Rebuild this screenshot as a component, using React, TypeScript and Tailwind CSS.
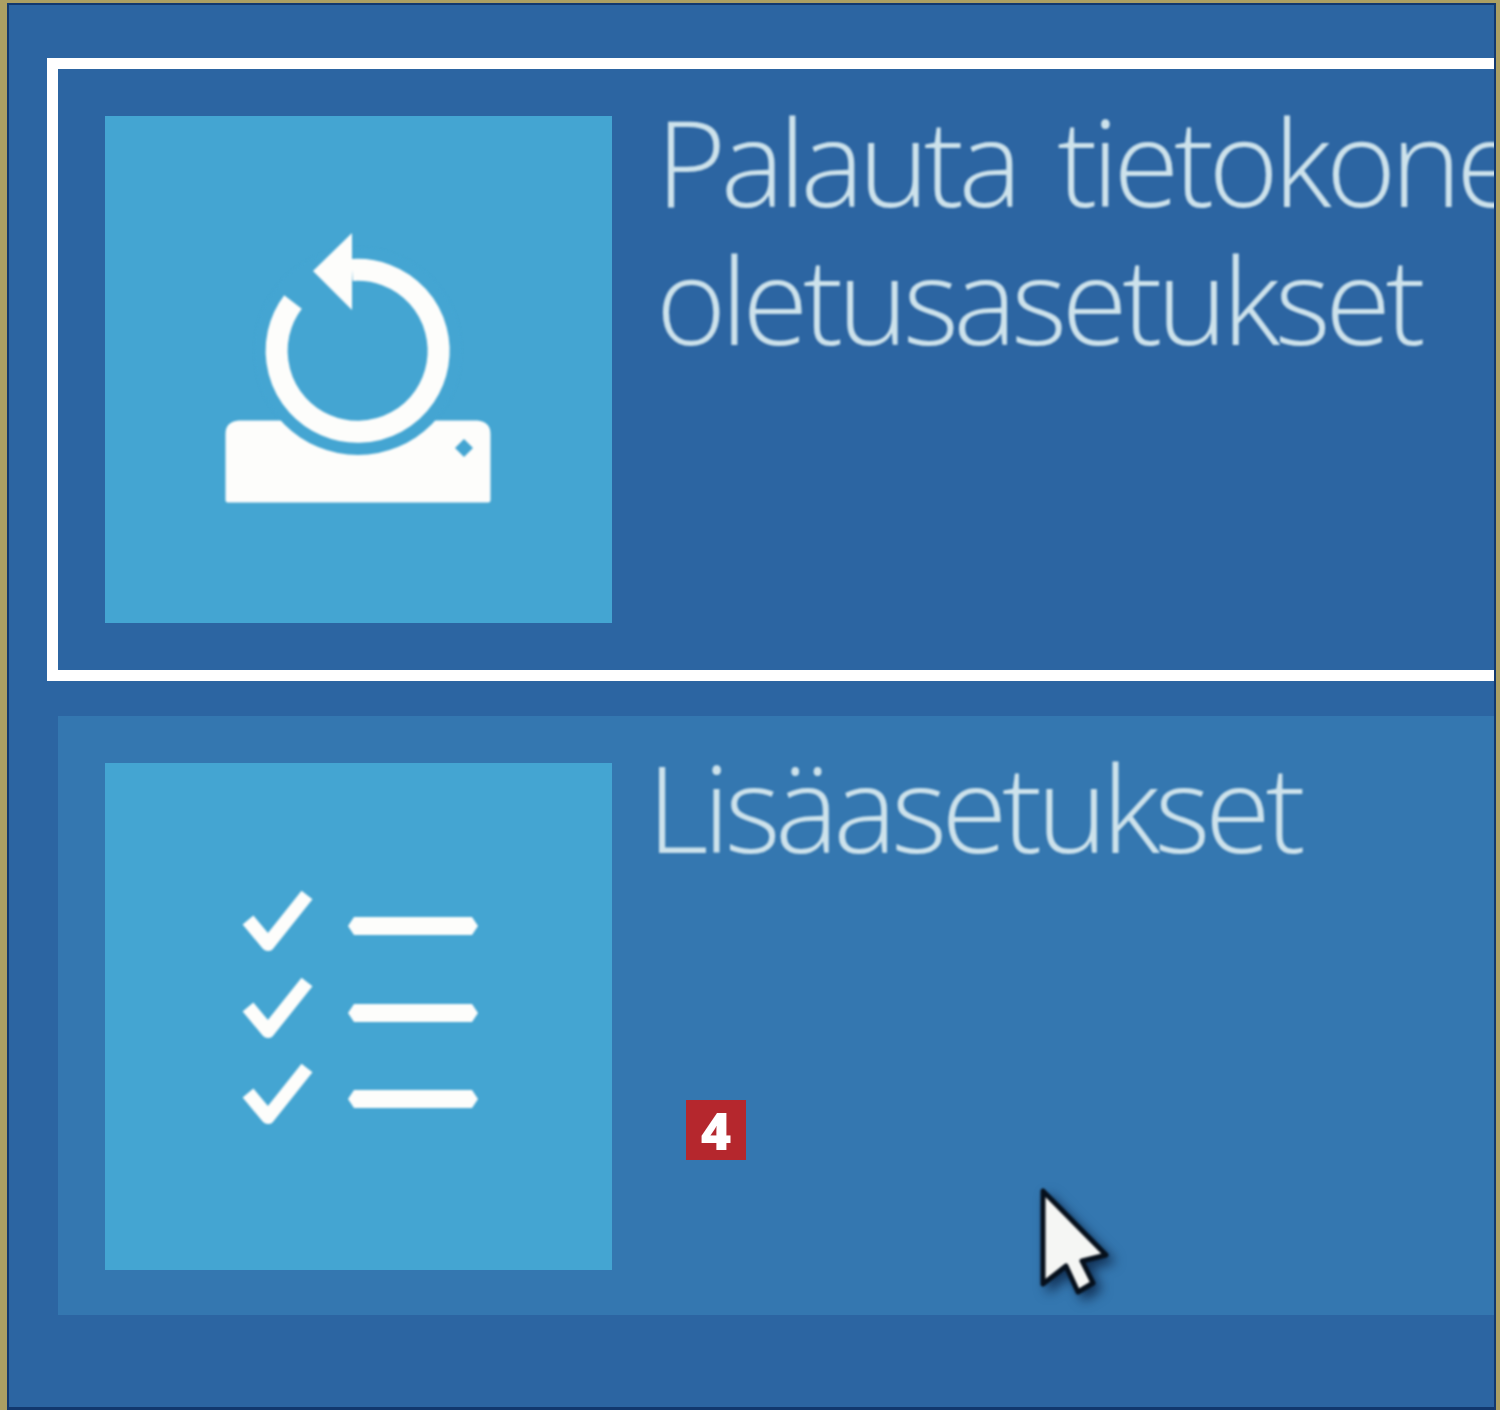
import React from 'react';

function RestoreIcon() {
  return (
    <svg viewBox="0 0 507 507" className="w-full h-full blur-[1px]">
      <path
        d="M123 318 Q123 308 134 307 H372 Q383 308 383 318 V384 H123 Z"
        fill="#fdfdfb"
        stroke="#fdfdfb"
        strokeWidth="5"
        strokeLinejoin="round" />
      <circle cx="253" cy="235" r="104" fill="#44a5d2" />
      <path d="M247 154 A81 81 0 1 1 188 186" fill="none" stroke="#fdfdfb" strokeWidth="22" />
      <polygon points="208,155 247,117 247,194" fill="#fdfdfb" />
      <polygon points="359,323 368,332 359,341 350,332" fill="#44a5d2" />
    </svg>
  );
}

function ChecklistIcon() {
  const rows = [0, 87, 173];
  return (
    <svg viewBox="0 0 507 507" className="w-full h-full blur-[1px]">
      {rows.map((dy) => (
        <g key={dy} transform={`translate(0 ${dy})`}>
          <path d="M143 157 L163 181 L202 132" fill="none" stroke="#fdfdfb" strokeWidth="14" strokeLinejoin="round" />
          <polygon points="243,163 249,154 367,154 373,163 367,172 249,172" fill="#fdfdfb" />
        </g>
      ))}
    </svg>
  );
}

function Cursor() {
  return (
    <svg
      viewBox="0 0 90 125"
      className="absolute left-[1035px] top-[1183px] w-[90px] h-[125px] blur-[0.8px] drop-shadow-[6px_6px_6px_rgba(8,30,60,0.75)]">
      <path
        d="M8 8 V101 L31 83 L43 109 L58 100 L47 78 L71 72 Z"
        fill="#f5f6f4"
        stroke="#06101c"
        strokeWidth="5"
        strokeLinejoin="round" />
    </svg>
  );
}

function Option({ icon, lines, className, textClass }: { icon: React.ReactNode; lines: string[]; className: string; textClass: string }) {
  return (
    <div className={`flex overflow-hidden pl-[47px] ${className}`}>
      <div className="w-[507px] h-[507px] shrink-0 bg-[#44a5d2]">{icon}</div>
      <div className={`font-['Open_Sans',sans-serif] font-light text-[120px] leading-[138px] tracking-[-5.5px] [word-spacing:15px] text-[#cde2eb] whitespace-nowrap blur-[1px] ${textClass}`}>
        {lines.map((line) => (
          <div key={line}>{line}</div>
        ))}
      </div>
    </div>
  );
}

export default function App() {
  return (
    <div className="relative w-[1500px] h-[1410px] overflow-hidden bg-[#ab9f63] pt-[3px] pl-[7px] pr-[4px]">
      <div className="h-full border-2 border-b-[3px] border-[#12386e] bg-[#2c65a2] pt-[53px] pl-[38px]">
        <div className="border-[11px] border-r-0 border-white">
          <Option
            icon={<RestoreIcon />}
            lines={['Palauta tietokoneen', 'oletusasetukset']}
            className="h-[601px] pt-[47px]"
            textClass="ml-[44px] -mt-[24px]" />
        </div>
        <div className="ml-[11px] mt-[35px]">
          <Option
            icon={<ChecklistIcon />}
            lines={['Lisäasetukset']}
            className="h-[599px] pt-[47px] bg-[#3477b0]"
            textClass="ml-[35px] -mt-[25px]" />
        </div>
      </div>
      <div className="absolute left-[686px] top-[1100px] w-[60px] h-[60px] flex items-center justify-center bg-[#b5272d] text-white font-['Open_Sans',sans-serif] font-extrabold text-[52px] leading-none">
        <span className="blur-[0.6px]">4</span>
      </div>
      <Cursor />
    </div>
  );
}
